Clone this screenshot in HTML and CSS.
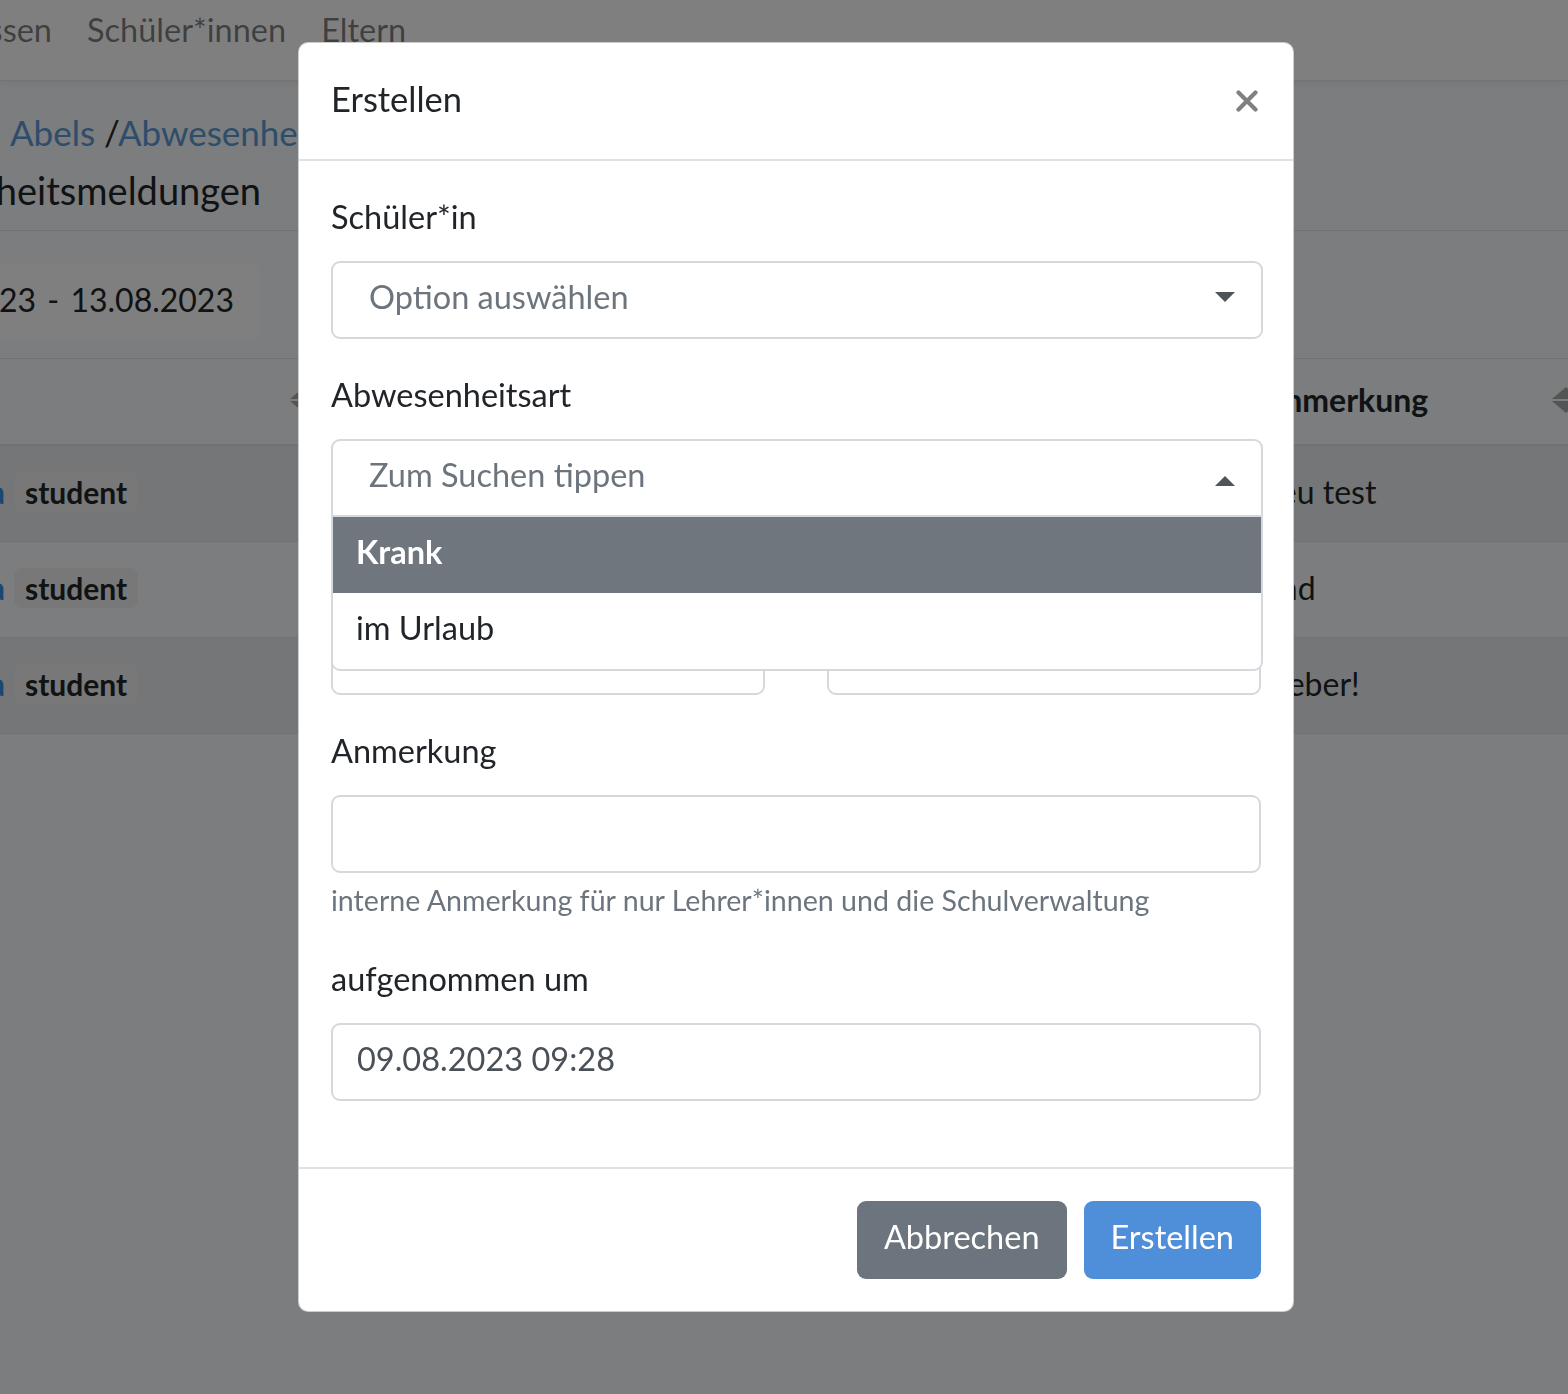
FILE: index.html
```html
<!DOCTYPE html>
<html lang="de">
<head>
<meta charset="utf-8">
<title>Abwesenheitsmeldungen</title>
<link rel="stylesheet" href="styles.css">
</head>
<body>
<div class="page">
  <nav class="navbar">
    <div class="nav-links">
      <span class="tail tail-nav"><a class="nav-link">Klassen</a></span>
      <a class="nav-link">Schüler*innen</a>
      <a class="nav-link">Eltern</a>
    </div>
  </nav>
  <div class="crumbs"><a class="crumb-link">Abels</a> /<a class="crumb-link">Abwesenheitsmeldungen</a></div>
  <div class="page-head">
    <span class="tail tail-head"><h1 class="page-title">Abwesenheitsmeldungen</h1></span>
  </div>
  <div class="filter">
    <span class="tail tail-date"><span class="daterange">09.08.2023 - 13.08.2023</span></span>
  </div>
  <div class="list">
    <div class="list-row list-head">
      <div class="cell cell-left"><span class="sort sort-left"><i class="up"></i><i class="down"></i></span></div>
      <div class="cell cell-right"><span class="th">Anmerkung</span><span class="sort"><i class="up"></i><i class="down"></i></span></div>
    </div>
    <div class="list-row striped">
      <div class="cell cell-left"><span class="tail tail-row"><a class="name">Lina</a></span><span class="badge">student</span></div>
      <div class="cell cell-right">neu test</div>
    </div>
    <div class="list-row">
      <div class="cell cell-left"><span class="tail tail-row"><a class="name">Lena</a></span><span class="badge">student</span></div>
      <div class="cell cell-right">und</div>
    </div>
    <div class="list-row striped">
      <div class="cell cell-left"><span class="tail tail-row"><a class="name">Mia</a></span><span class="badge">student</span></div>
      <div class="cell cell-right">Fieber!</div>
    </div>
  </div>
</div>

<div class="backdrop"></div>

<div class="modal">
  <div class="dialog">
    <div class="modal-header">
      <h5 class="modal-title">Erstellen</h5>
      <button class="close" type="button" aria-label="Schließen">
        <svg width="22" height="22" viewBox="0 0 22 22"><path d="M2.5 2.5 L19.5 19.5 M19.5 2.5 L2.5 19.5" stroke="#808080" stroke-width="4.2" stroke-linecap="round" fill="none"/></svg>
      </button>
    </div>
    <div class="modal-body">
      <div class="form-group">
        <label class="label">Schüler*in</label>
        <div class="select">
          <span class="placeholder">Option auswählen</span>
          <span class="caret caret-down"></span>
        </div>
      </div>
      <div class="form-group">
        <label class="label">Abwesenheitsart</label>
        <div class="select-wrap">
          <div class="select select-open">
            <span class="placeholder">Zum Suchen tippen</span>
            <span class="caret caret-up"></span>
          </div>
          <ul class="dropdown">
            <li class="option option-active">Krank</li>
            <li class="option">im Urlaub</li>
          </ul>
        </div>
      </div>
      <div class="form-row">
        <div class="form-col">
          <label class="label">von</label>
          <div class="input"></div>
        </div>
        <div class="form-col">
          <label class="label">bis</label>
          <div class="input"></div>
        </div>
      </div>
      <div class="form-group">
        <label class="label">Anmerkung</label>
        <div class="input"></div>
        <small class="help">interne Anmerkung für nur Lehrer*innen und die Schulverwaltung</small>
      </div>
      <div class="form-group">
        <label class="label">aufgenommen um</label>
        <div class="input input-value">09.08.2023 09:28</div>
      </div>
    </div>
    <div class="modal-footer">
      <button class="btn btn-secondary" type="button">Abbrechen</button>
      <button class="btn btn-primary" type="button">Erstellen</button>
    </div>
  </div>
</div>
</body>
</html>
```

FILE: styles.css
```css
* { box-sizing: border-box; }

html, body {
  margin: 0;
  padding: 0;
  width: 1568px;
  height: 1394px;
  overflow: hidden;
}

body {
  font-family: "Lato", "Noto Sans", sans-serif;
  font-size: 32px;
  line-height: 48px;
  color: #212529;
  background: #f8fafc;
}

/* ---------- background page ---------- */
.page { width: 1568px; }

.tail {
  display: flex;
  justify-content: flex-end;
  flex-shrink: 0;
  white-space: nowrap;
}
.tail-nav { width: 52px; }
.tail-head { width: 261px; }
.tail-date { width: 260px; }
.tail-row { width: 5px; }

.navbar {
  height: 81px;
  background: #ffffff;
  border-bottom: 1px solid #e6e6e6;
  box-shadow: 0 2px 8px rgba(0,0,0,.06);
  padding-top: 6px;
}
.nav-links {
  display: flex;
  gap: 35px;
}
.nav-link {
  color: rgba(0,0,0,.5);
  white-space: nowrap;
  font-size: 32.5px;
}

.crumbs {
  margin-top: 27px;
  padding-left: 10px;
  color: #212529;
  white-space: nowrap;
  font-size: 35px;
}
.crumb-link { color: #5d9ad6; }

.page-head {
  padding: 8px 0 14px;
  border-bottom: 1px solid #dee2e6;
}
.page-title {
  margin: 0;
  font-size: 38px;
  font-weight: 400;
  line-height: 52px;
}

.filter {
  padding-top: 33px;
  padding-bottom: 18px;
}
.daterange {
  display: block;
  background: #ffffff;
  border-radius: 10px;
  padding: 12px 26px 16px 40px;
  line-height: 48px;
  word-spacing: 3px;
}

.list { border-top: 1px solid #dee2e6; }
.list-row {
  display: flex;
  height: 96px;
  border-bottom: 1px solid #dee2e6;
  align-items: center;
  padding-bottom: 4px;
}
.list-head {
  height: 87px;
  border-bottom: 2px solid #dee2e6;
  font-weight: 700;
}
.striped { background: rgba(0,0,0,.05); }
.cell-left {
  width: 1262px;
  display: flex;
  align-items: center;
  gap: 9px;
}
.cell-right {
  flex: 1;
  display: flex;
  align-items: center;
  justify-content: space-between;
  white-space: nowrap;
}
.name { color: #3490dc; font-weight: 700; }
.badge {
  background: #f1f1f1;
  border-radius: 8px;
  padding: 0 11px;
  font-weight: 700;
  font-size: 30px;
  line-height: 40px;
}
.sort {
  display: flex;
  flex-direction: column;
  gap: 2px;
  margin-right: -12px;
}
.sort-left { margin-left: 290px; }
.sort .up, .sort .down {
  display: block;
  width: 0;
  height: 0;
  border-left: 14px solid transparent;
  border-right: 14px solid transparent;
}
.sort .up { border-bottom: 12px solid #a8a8a8; }
.sort .down { border-top: 12px solid #a8a8a8; }

/* ---------- backdrop ---------- */
.backdrop {
  position: fixed;
  inset: 0;
  background: rgba(0,0,0,.5);
}

/* ---------- modal ---------- */
.modal {
  position: fixed;
  inset: 0;
}
.dialog {
  margin: 42px 0 0 298px;
  width: 996px;
  background: #ffffff;
  border: 1px solid rgba(0,0,0,.2);
  border-radius: 10px;
}

.modal-header {
  height: 118px;
  display: flex;
  align-items: center;
  justify-content: space-between;
  padding: 0 35px 4px 32px;
  border-bottom: 2px solid #dee2e6;
}
.modal-title {
  margin: 0;
  font-size: 34.5px;
  font-weight: 400;
  line-height: 48px;
  color: #212529;
}
.close {
  background: none;
  border: 0;
  padding: 0;
  width: 22px;
  height: 22px;
  display: flex;
  margin-top: 4px;
}

.modal-body { padding: 32px 32px 34px; }

.form-group { margin-bottom: 32px; }
.label {
  display: block;
  margin-bottom: 20px;
  line-height: 48px;
  color: #212529;
  font-size: 32.5px;
}

.select {
  height: 78px;
  width: calc(100% + 2px);
  border: 2px solid #d5d9de;
  border-radius: 9px;
  display: flex;
  align-items: center;
  justify-content: space-between;
  padding: 0 26px 6px 36px;
  background: #ffffff;
  font-size: 32.5px;
}
.placeholder { color: #6c757d; }
.caret {
  width: 0;
  height: 0;
  border-left: 10px solid transparent;
  border-right: 10px solid transparent;
}
.caret-down { border-top: 10px solid #4f545a; margin-top: 0; }
.caret-up { border-bottom: 10px solid #4f545a; margin-top: 12px; }

.select-wrap { position: relative; }
.select-open {
  border-bottom-left-radius: 0;
  border-bottom-right-radius: 0;
}
.dropdown {
  position: absolute;
  left: 0;
  top: 78px;
  width: calc(100% + 2px);
  margin: 0;
  padding: 0;
  list-style: none;
  background: #ffffff;
  border: 2px solid #d5d9de;
  border-top: 0;
  border-radius: 0 0 9px 9px;
  overflow: hidden;
  z-index: 2;
}
.option {
  height: 76px;
  line-height: 70px;
  padding-left: 23px;
  color: #212529;
  font-size: 32.5px;
}
.option-active {
  background: #6f767e;
  color: #ffffff;
  font-weight: 700;
}

.form-row {
  display: grid;
  grid-template-columns: 1fr 1fr;
  column-gap: 62px;
  margin-bottom: 32px;
}

.input {
  height: 78px;
  border: 2px solid #d5d9de;
  border-radius: 9px;
  background: #ffffff;
  padding: 0 24px 6px;
  display: flex;
  align-items: center;
  color: #495057;
  font-size: 32.5px;
}

.help {
  display: block;
  margin-top: 8px;
  font-size: 28.6px;
  line-height: 38px;
  padding-bottom: 4px;
  color: #6c757d;
}

.modal-footer {
  border-top: 2px solid #dee2e6;
  padding: 32px;
  display: flex;
  justify-content: flex-end;
  gap: 17px;
}
.btn {
  font-family: inherit;
  font-size: 32.5px;
  line-height: 48px;
  height: 78px;
  padding: 0 27px 6px;
  border: 0;
  border-radius: 9px;
  color: #ffffff;
}
.btn-secondary { background: #6c757d; }
.btn-primary { background: #4f8ed8; }
```
